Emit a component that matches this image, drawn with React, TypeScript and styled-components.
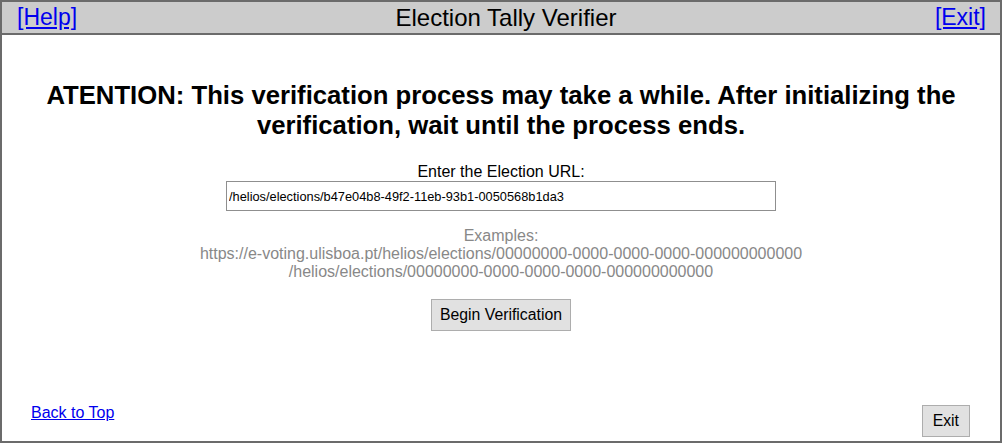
import React from "react";
import styled, { createGlobalStyle } from "styled-components";

const GlobalStyle = createGlobalStyle`
  html, body {
    margin: 0;
    padding: 0;
    background: #fff;
  }
  body {
    font-family: "Liberation Sans", Arial, sans-serif;
  }
`;

const Frame = styled.div`
  box-sizing: border-box;
  width: 1002px;
  height: 443px;
  border: 2px solid #6b6b6b;
  display: flex;
  flex-direction: column;
`;

const TopBar = styled.div`
  display: flex;
  align-items: center;
  height: 31px;
  padding: 0 14px 0 15px;
  background: #cccccc;
  border-bottom: 2px solid #6b6b6b;
  font-size: 23px;
`;

const BarLink = styled.a`
  color: #0000ee;
  text-decoration: underline;
  cursor: pointer;
`;

const Title = styled.div`
  flex: 1;
  text-align: center;
  color: #000;
  font-size: 24px;
`;

const Body = styled.div`
  flex: 1;
  display: flex;
  flex-direction: column;
  align-items: center;
`;

const Heading = styled.h1`
  margin: 45px 20px 0;
  font-size: 25.7px;
  line-height: 30px;
  font-weight: bold;
  text-align: center;
`;

const Label = styled.div`
  margin-top: 23px;
  font-size: 16px;
  line-height: 18px;
`;

const UrlInput = styled.input`
  box-sizing: border-box;
  width: 550px;
  height: 30px;
  padding: 0 2px;
  border: 1px solid #8f8f8f;
  font-family: "Liberation Sans", Arial, sans-serif;
  font-size: 12.8px;
  color: #000;
  outline: none;
`;

const Examples = styled.div`
  margin-top: 16px;
  color: #888888;
  font-size: 16px;
  line-height: 18px;
  text-align: center;
`;

const Button = styled.button<{ $pad?: number }>`
  box-sizing: border-box;
  height: 32px;
  padding: 0 ${(p) => p.$pad ?? 8}px;
  background: #e1e1e1;
  border: 1px solid #adadad;
  border-radius: 0;
  font-family: "Liberation Sans", Arial, sans-serif;
  font-size: 15.8px;
  color: #000;
  cursor: pointer;
`;

const BeginButton = styled(Button)`
  margin-top: 18px;
`;

const Footer = styled.div`
  display: flex;
  justify-content: space-between;
  align-items: center;
  padding: 0 30px 4px 29px;
`;

const TopLink = styled.a`
  color: #0000ee;
  font-size: 16px;
  text-decoration: underline;
  cursor: pointer;
  margin-top: -16px;
`;

export default function App() {
  const [url, setUrl] = React.useState(
    "/helios/elections/b47e04b8-49f2-11eb-93b1-0050568b1da3"
  );

  return (
    <>
      <GlobalStyle />
      <Frame>
        <TopBar>
          <BarLink>[Help]</BarLink>
          <Title>Election Tally Verifier</Title>
          <BarLink>[Exit]</BarLink>
        </TopBar>
        <Body>
          <Heading>
            ATENTION: This verification process may take a while. After
            initializing the verification, wait until the process ends.
          </Heading>
          <Label>Enter the Election URL:</Label>
          <UrlInput value={url} onChange={(e) => setUrl(e.target.value)} />
          <Examples>
            Examples:
            <br />
            https://e-voting.ulisboa.pt/helios/elections/00000000-0000-0000-0000-000000000000
            <br />
            /helios/elections/00000000-0000-0000-0000-000000000000
          </Examples>
          <BeginButton>Begin Verification</BeginButton>
        </Body>
        <Footer>
          <TopLink>Back to Top</TopLink>
          <Button $pad={10}>Exit</Button>
        </Footer>
      </Frame>
    </>
  );
}
